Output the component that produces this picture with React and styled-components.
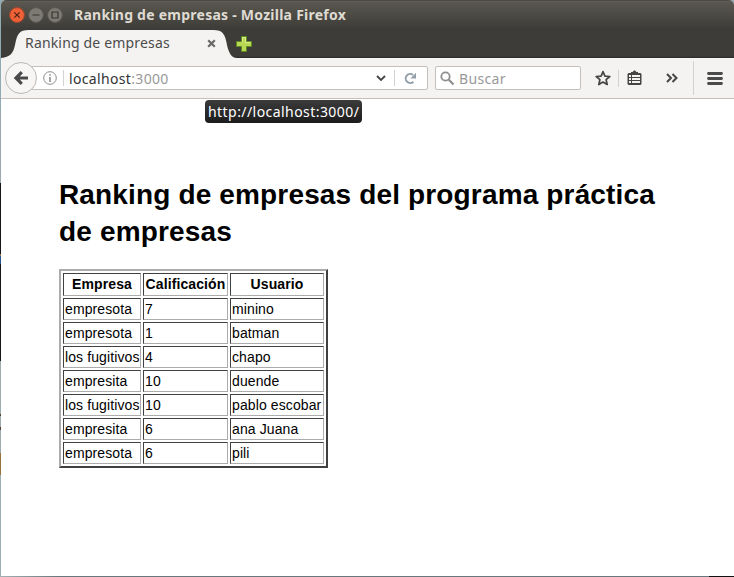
import React from "react";
import styled, { createGlobalStyle } from "styled-components";

const GlobalStyle = createGlobalStyle`
  * { box-sizing: border-box; }
  body { margin: 0; overflow: hidden; background: #fff; }
  svg { display: block; flex: none; }
`;

const Desktop = styled.div`
  width: 734px;
  height: 577px;
  padding: 0 0 1px 1px;
  font-family: "Noto Sans", "Open Sans", sans-serif;
  background:
    linear-gradient(#111, #111) 709px 576px / 25px 1px no-repeat,
    linear-gradient(90deg, #a3b1b3, #68777b 60px) 0 576px / 734px 1px no-repeat,
    linear-gradient(#94aab2 0 110px, #9ba9ac 110px 183px, #151515 183px 254px,
      #a07850 254px 256px, #29558c 256px 264px, #151515 264px 361px,
      #9caaac 361px 414px, #4d4434 414px 416px, #9caaac 416px 427px,
      #4d4434 427px 430px, #9caaac 430px 453px, #98713d 453px 475px, #9daeb2 475px);
`;

const Window = styled.div`
  height: 576px;
  display: flex;
  flex-direction: column;
  border-radius: 5px 5px 0 0;
  overflow: hidden;
  background: #fff;
`;

const TitleBar = styled.header`
  height: 28px;
  display: flex;
  align-items: center;
  padding: 1px 0 0 8px;
  background: linear-gradient(#4b4944 0, #4b4944 1px, #66645d 1px, #59574f 2px, #3e3d39 28px);
`;

const Controls = styled.div`
  display: flex;
  gap: 3px;
`;

const WindowTitle = styled.div`
  margin-left: 11px;
  color: #dfdbd2;
  font-size: 14px;
  font-weight: 700;
  line-height: 20px;
  letter-spacing: ${(p) => p.$track}px;
  white-space: nowrap;
`;

const TabStrip = styled.div`
  height: 30px;
  display: flex;
  flex: none;
  background: linear-gradient(#3d3c38 0 28px, #33322e 29px, #2b2a27 30px);
`;

const Tab = styled.div`
  position: relative;
  width: 235px;
  height: 30px;
  display: flex;
  align-items: center;
`;

const TabShape = styled.svg`
  position: absolute;
  inset: 0;
`;

const TabLabel = styled.span`
  position: relative;
  width: 181px;
  padding-left: 24px;
  color: #4c4c4c;
  font-size: 14px;
  line-height: 20px;
  letter-spacing: ${(p) => p.$track}px;
  white-space: nowrap;
`;

const TabClose = styled.svg`
  position: relative;
  margin: 0 0 0 25px;
`;

const NewTab = styled.svg`
  margin-top: 8px;
`;

const Toolbar = styled.nav`
  height: 41px;
  flex: none;
  display: flex;
  align-items: center;
  padding-left: 4px;
  background: #f4f3f1;
  border-bottom: 1px solid #c4c1bd;
`;

const BackButton = styled.div`
  width: 32px;
  height: 32px;
  display: grid;
  place-items: center;
  flex: none;
  z-index: 1;
  border: 1px solid #bbb8b4;
  border-radius: 50%;
  background: #f7f6f5;
`;

const Field = styled.div`
  height: 24px;
  display: flex;
  align-items: center;
  flex: none;
  width: ${(p) => p.$width}px;
  margin-left: ${(p) => p.$left}px;
  padding-left: ${(p) => p.$pad}px;
  border: 1px solid #c3c0bc;
  border-radius: 2px;
  background: #fff;
`;

const FieldText = styled.span`
  flex: 1;
  margin-left: ${(p) => p.$gap}px;
  padding-top: 1px;
  color: ${(p) => p.$color};
  font-size: 14px;
  line-height: 20px;
  letter-spacing: ${(p) => p.$track}px;
  white-space: nowrap;
`;

const Port = styled.span`
  color: #999;
`;

const Divider = styled.i`
  width: 1px;
  flex: none;
  height: ${(p) => p.$height}px;
  margin: 0 ${(p) => p.$right}px 0 ${(p) => p.$left}px;
  background: #d4d1ce;
`;

const Actions = styled.div`
  display: flex;
  align-items: center;
  margin-left: 14px;
`;

const Tooltip = styled.aside`
  position: absolute;
  left: 205px;
  top: 100px;
  width: 157px;
  height: 23px;
  padding-left: 3px;
  border-radius: 4px;
  background: linear-gradient(#3b3b3b, #1c1c1c);
  color: #fff;
  font-size: 14px;
  line-height: 23px;
  letter-spacing: ${(p) => p.$track}px;
  white-space: nowrap;
`;

const Page = styled.main`
  flex: 1;
  padding: 77px 58px 0;
  background: #fff;
  color: #000;
  font-family: "Liberation Sans", Arial, sans-serif;
  font-size: 14px;
`;

const Heading = styled.h1`
  margin: 0 0 19px;
  font-size: 28px;
  line-height: 37px;
  letter-spacing: ${(p) => p.$track}px;
`;

const Table = styled.table`
  width: 269px;
  table-layout: fixed;
  border: 2px solid;
  border-color: #acacac #404040 #404040 #acacac;
  border-collapse: separate;
  border-spacing: 2px;
`;

const Cell = styled.td`
  height: 22px;
  padding: 0 1px;
  border: 1px solid;
  border-color: #404040 #acacac #acacac #404040;
  line-height: 20px;
  letter-spacing: 0.11px;
  white-space: nowrap;
`;

const HeadCell = styled(Cell)`
  width: ${(p) => p.$width}px;
  height: 23px;
  line-height: 21px;
  font-weight: 700;
  text-align: center;
`;

const rows = [
  ["empresota", 7, "minino"],
  ["empresota", 1, "batman"],
  ["los fugitivos", 4, "chapo"],
  ["empresita", 10, "duende"],
  ["los fugitivos", 10, "pablo escobar"],
  ["empresita", 6, "ana Juana"],
  ["empresota", 6, "pili"],
];

function ControlIcon({ fill, ring, mark, d }) {
  return (
    <svg width="16" height="16" viewBox="0 0 16 16">
      <circle cx="8" cy="8" r="7.4" fill={fill} stroke={ring} />
      <path d={d} fill="none" stroke={mark} strokeWidth="1.2" />
    </svg>
  );
}

export default function App() {
  return (
    <Desktop>
      <GlobalStyle />
      <Window>
        <TitleBar>
          <Controls>
            <ControlIcon fill="#ee6137" ring="#a74529" mark="#4b2216" d="M5.3 5.3l5.4 5.4M10.7 5.3l-5.4 5.4" />
            <ControlIcon fill="#7c7a72" ring="#595750" mark="#35342f" d="M4.5 8h7" />
            <ControlIcon fill="#7c7a72" ring="#595750" mark="#35342f" d="M5 5h6v6H5z" />
          </Controls>
          <WindowTitle $track={0.25}>Ranking de empresas - Mozilla Firefox</WindowTitle>
        </TitleBar>
        <TabStrip>
          <Tab>
            <TabShape width="236" height="30" viewBox="0 0 236 30">
              <path
                d="M0 30C9 29 12 26 14 17C16 6 18 2 28 2H212C222 2 224 6 226 17C228 26 231 30 236 30Z"
                fill="#f4f3f1"
              />
            </TabShape>
            <TabLabel $track={0.17}>Ranking de empresas</TabLabel>
            <TabClose width="9" height="9" viewBox="0 0 9 9">
              <path d="M1.2 1.2l6.6 6.6M7.8 1.2L1.2 7.8" stroke="#696969" strokeWidth="2.2" />
            </TabClose>
          </Tab>
          <NewTab width="16" height="16" viewBox="0 0 16 16">
            <path d="M5.5.5h5v5h5v5h-5v5h-5v-5h-5v-5h5z" fill="#b8d854" stroke="#5e8c22" />
            <path d="M6.5 6.5v-5h3v5h5" fill="none" stroke="#dced8e" />
          </NewTab>
        </TabStrip>
        <Toolbar>
          <BackButton>
            <svg width="16" height="16" viewBox="0 0 16 16">
              <path d="M8.8 2.2L3 8l5.8 5.8M3.5 8H15" fill="none" stroke="#4a4a4a" strokeWidth="3.2" />
            </svg>
          </BackButton>
          <Field $width={399} $left={-8} $pad={13}>
            <svg width="14" height="14" viewBox="0 0 14 14">
              <circle cx="7" cy="7" r="6.3" fill="none" stroke="#8d8d8d" />
              <path d="M6.2 3.2h1.6v1.5H6.2zM6.2 6h1.6v5H6.2z" fill="#8d8d8d" />
            </svg>
            <Divider $height={16} $left={6} $right={0} />
            <FieldText $gap={5} $color="#333" $track={0.34}>
              localhost<Port>:3000</Port>
            </FieldText>
            <svg width="10" height="7" viewBox="0 0 10 7">
              <path d="M1 1l4 4 4-4" fill="none" stroke="#454545" strokeWidth="1.8" />
            </svg>
            <Divider $height={16} $left={8} $right={9} />
            <svg width="13" height="13" viewBox="0 0 13 13">
              <path d="M9.4 9.7A4.5 4.5 0 1 1 9 3" fill="none" stroke="#94a0aa" strokeWidth="2" />
              <path d="M12 .8v5.7H6.4z" fill="#94a0aa" />
            </svg>
            <Divider $height={0} $left={0} $right={9} />
          </Field>
          <Field $width={146} $left={7} $pad={4}>
            <svg width="15" height="15" viewBox="0 0 15 15">
              <circle cx="5.5" cy="5.5" r="4.2" fill="none" stroke="#8e8e8e" strokeWidth="1.8" />
              <path d="M8.8 8.8l4.7 4.7" stroke="#8e8e8e" strokeWidth="2.2" />
            </svg>
            <FieldText $gap={4} $color="#999" $track={0.35}>Buscar</FieldText>
          </Field>
          <Actions>
            <svg width="16" height="16" viewBox="0 0 16 16">
              <path
                d="M8 1.6l1.9 4.5 4.9.4-3.7 3.2 1.1 4.8L8 12l-4.2 2.5 1.1-4.8L1.2 6.5l4.9-.4z"
                fill="none" stroke="#454545" strokeWidth="1.7" strokeLinejoin="round"
              />
            </svg>
            <Divider $height={17} $left={7} $right={8} />
            <svg width="15" height="16" viewBox="0 0 15 16">
              <path d="M1.5 3H4V2h1.5L7 .5h1L9.5 2H11v1h2.5L14.5 4v10l-1 1h-12l-1-1V4z" fill="#454545" />
              <path d="M2 5h11v8H2z" fill="#f4f3f1" />
              <path d="M2 7.5h11M2 10.5h11M4.5 5v8" stroke="#454545" />
            </svg>
            <Divider $height={0} $left={10} $right={13} />
            <svg width="12" height="10" viewBox="0 0 12 10">
              <path d="M1 1l4 4-4 4M6.5 1l4 4-4 4" fill="none" stroke="#454545" strokeWidth="2" />
            </svg>
            <Divider $height={34} $left={15} $right={13} />
            <svg width="16" height="13" viewBox="0 0 16 13">
              <path d="M1.5 1.5h13M1.5 6.5h13M1.5 11.5h13" stroke="#4a4a4a" strokeWidth="2.8" strokeLinecap="round" />
            </svg>
          </Actions>
        </Toolbar>
        <Page>
          <Heading $track={0.15}>Ranking de empresas del programa práctica de empresas</Heading>
          <Table>
            <thead>
              <tr>
                <HeadCell as="th" $width={78}>Empresa</HeadCell>
                <HeadCell as="th" $width={85}>Calificación</HeadCell>
                <HeadCell as="th" $width={94}>Usuario</HeadCell>
              </tr>
            </thead>
            <tbody>
              {rows.map((row, i) => (
                <tr key={i}>
                  {row.map((value, j) => (
                    <Cell key={j}>{value}</Cell>
                  ))}
                </tr>
              ))}
            </tbody>
          </Table>
        </Page>
      </Window>
      <Tooltip $track={0.44}>http://localhost:3000/</Tooltip>
    </Desktop>
  );
}
